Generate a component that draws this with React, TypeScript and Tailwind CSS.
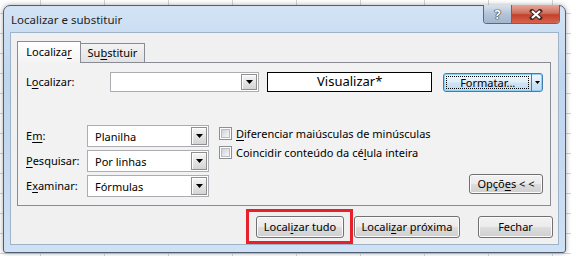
import React from 'react';

function K({ children }: { children: React.ReactNode }) {
  return <span className="underline decoration-1 underline-offset-[2px]">{children}</span>;
}

function DropBtn() {
  return (
    <span className="m-px flex w-[16px] items-center justify-center border border-[#8f8f8f] bg-[linear-gradient(#f6f6f6,#d4d4d4)] shadow-[inset_1px_1px_0_#ffffff]">
      <svg width="7" height="4" viewBox="0 0 7 4">
        <path d="M0 0h7L3.5 4z" fill="#000" />
      </svg>
    </span>
  );
}

function Combo({ value, className }: { value?: string; className: string }) {
  return (
    <div className={`flex items-stretch border border-[#abadb3] bg-white ${className}`}>
      <span className="flex flex-1 items-center pl-[7px] leading-none">{value}</span>
      <DropBtn />
    </div>
  );
}

function Check({ children }: { children: React.ReactNode }) {
  return (
    <div className="flex h-[19px] items-start gap-[4px]">
      <span className="block h-[13px] w-[13px] border border-[#8e8f8f] bg-white p-[1px]">
        <span className="block h-full w-full border border-[#b8bcc2] bg-[linear-gradient(135deg,#cfd3d8,#f7f7f7)]" />
      </span>
      <span className="leading-[13px]">{children}</span>
    </div>
  );
}

function Btn({ children, className }: { children: React.ReactNode; className: string }) {
  return (
    <div
      className={`flex items-center justify-center rounded-[3px] border border-[#707070] bg-[linear-gradient(#f2f2f2_0%,#ebebeb_48%,#dddddd_52%,#cfcfcf_100%)] shadow-[inset_0_0_0_1px_#fbfbfb] ${className}`}
    >
      {children}
    </div>
  );
}

export default function App() {
  return (
    <div className="h-[256px] w-[571px] overflow-hidden bg-white pl-[3px] pt-[5px] font-['Segoe_UI','Noto_Sans',sans-serif] text-[11px] text-black [background-image:linear-gradient(to_right,#d4d4d4_1px,transparent_1px),linear-gradient(to_bottom,#d4d4d4_1px,transparent_1px)] [background-position:40px_13px] [background-size:64px_20px]">
      <div className="flex h-[248px] w-[563px] flex-col rounded-t-[7px] rounded-b-[3px] border border-[#4f5f72] bg-[linear-gradient(to_bottom,#d3e3f5,#bfd6ef_30%,#c6daf1_70%,#cfe1f5)] shadow-[0_0_5px_rgba(0,0,0,0.35)]">
        {/* title bar */}
        <div className="flex h-[26px] items-center pl-[7px]">
          <span className="pt-[1px] text-[11.5px] text-[#1e1e1e]">Localizar e substituir</span>
          <div className="-mt-[1px] mr-[5px] ml-auto flex h-[19px] self-start overflow-hidden rounded-b-[4px] border border-t-0 border-[#5a6a7d]">
            <div className="flex w-[28px] items-center justify-center border-r border-[#5a6a7d] bg-[linear-gradient(#d8e2ee,#b4c4d8_50%,#a3b6cd)]">
              <span className="text-[13px] font-bold leading-none text-white [text-shadow:0_0_1px_#222,0_0_1px_#222,0_0_1px_#222]">?</span>
            </div>
            <div className="flex w-[47px] items-center justify-center bg-[linear-gradient(#e8a798,#d0705e_45%,#c2412c_55%,#d9634d)]">
              <svg width="14" height="11" viewBox="0 0 14 11">
                <path d="M3 2L11 9M11 2L3 9" stroke="#3b2b2b" strokeWidth="4.2" strokeLinecap="square" />
                <path d="M3 2L11 9M11 2L3 9" stroke="#ffffff" strokeWidth="2.2" />
              </svg>
            </div>
          </div>
        </div>

        {/* client area */}
        <div className="mx-[6px] flex h-[213px] flex-col border border-[#9fb2c8] bg-[#f0f0f0]">
          <div className="pt-[8px] pl-[6px] pr-[7px]">
            <div className="flex h-[21px] items-end">
              <div className="relative z-10 -mb-px flex h-[22px] w-[64px] items-center justify-center border border-b-0 border-[#898c95] bg-[linear-gradient(#ffffff,#f3f3f3)]">
                Localiza<K>r</K>
              </div>
              <div className="-ml-px flex h-[19px] w-[65px] items-center justify-center border border-b-0 border-[#898c95] bg-[linear-gradient(#f3f3f3,#e3e3e3)]">
                Su<K>b</K>stituir
              </div>
            </div>
            <div className="flex h-[144px] flex-col border border-[#898c95] bg-[#f2f2f2] pl-[8px] pr-[7px]">
              <div className="mt-[9px] flex h-[20px] items-center">
                <span className="w-[84px]">
                  L<K>o</K>calizar:
                </span>
                <Combo className="h-[20px] w-[150px]" />
                <div className="ml-[8px] flex h-[20px] w-[166px] items-center justify-center border border-black bg-white text-[13px]">
                  Visualizar*
                </div>
                <div className="ml-[11px] flex h-[19px] w-[100px] rounded-[3px] border border-[#3c7fb1] bg-[linear-gradient(#eef7fd,#e0eef9_48%,#cfe4f5_52%,#c3dcf1)] shadow-[inset_0_0_0_1px_#8fd0f8]">
                  <div className="m-[2px] flex flex-1 items-center justify-center border border-dotted border-black leading-none">
                    Formatar...
                  </div>
                  <div className="flex w-[11px] items-center justify-center border-l border-[#3c7fb1]">
                    <svg width="5" height="3" viewBox="0 0 5 3">
                      <path d="M0 0h5L2.5 3z" fill="#000" />
                    </svg>
                  </div>
                </div>
              </div>

              <div className="mt-[33px] flex">
                <div className="grid grid-cols-[61px_122px] gap-y-[3px]">
                  <span className="flex items-center">
                    E<K>m</K>:
                  </span>
                  <Combo value="Planilha" className="h-[22px]" />
                  <span className="flex items-center">
                    <K>P</K>esquisar:
                  </span>
                  <Combo value="Por linhas" className="h-[22px]" />
                  <span className="flex items-center">
                    E<K>x</K>aminar:
                  </span>
                  <Combo value="Fórmulas" className="h-[22px]" />
                </div>
                <div className="ml-[10px] flex flex-1 flex-col pt-[2px]">
                  <Check>
                    <K>D</K>iferenciar maiúsculas de minúsculas
                  </Check>
                  <Check>
                    Coincidir conteúdo da cé<K>l</K>ula inteira
                  </Check>
                  <Btn className="mt-auto mb-[3px] h-[20px] w-[74px] self-end">
                    Opçõ<K>e</K>s &lt; &lt;
                  </Btn>
                </div>
              </div>
            </div>
          </div>

          <div className="mt-[10px] flex justify-end pr-[5px]">
            <div className="relative">
              <Btn className="h-[22px] w-[88px]">
                Local<K>i</K>zar tudo
              </Btn>
              <div className="absolute -top-[7px] -left-[10px] h-[35px] w-[107px] border-[3px] border-[#e8202a]" />
            </div>
            <Btn className="ml-[10px] h-[22px] w-[106px]">
              Locali<K>z</K>ar próxima
            </Btn>
            <Btn className="ml-[18px] h-[22px] w-[75px]">Fechar</Btn>
          </div>
        </div>
      </div>
    </div>
  );
}
